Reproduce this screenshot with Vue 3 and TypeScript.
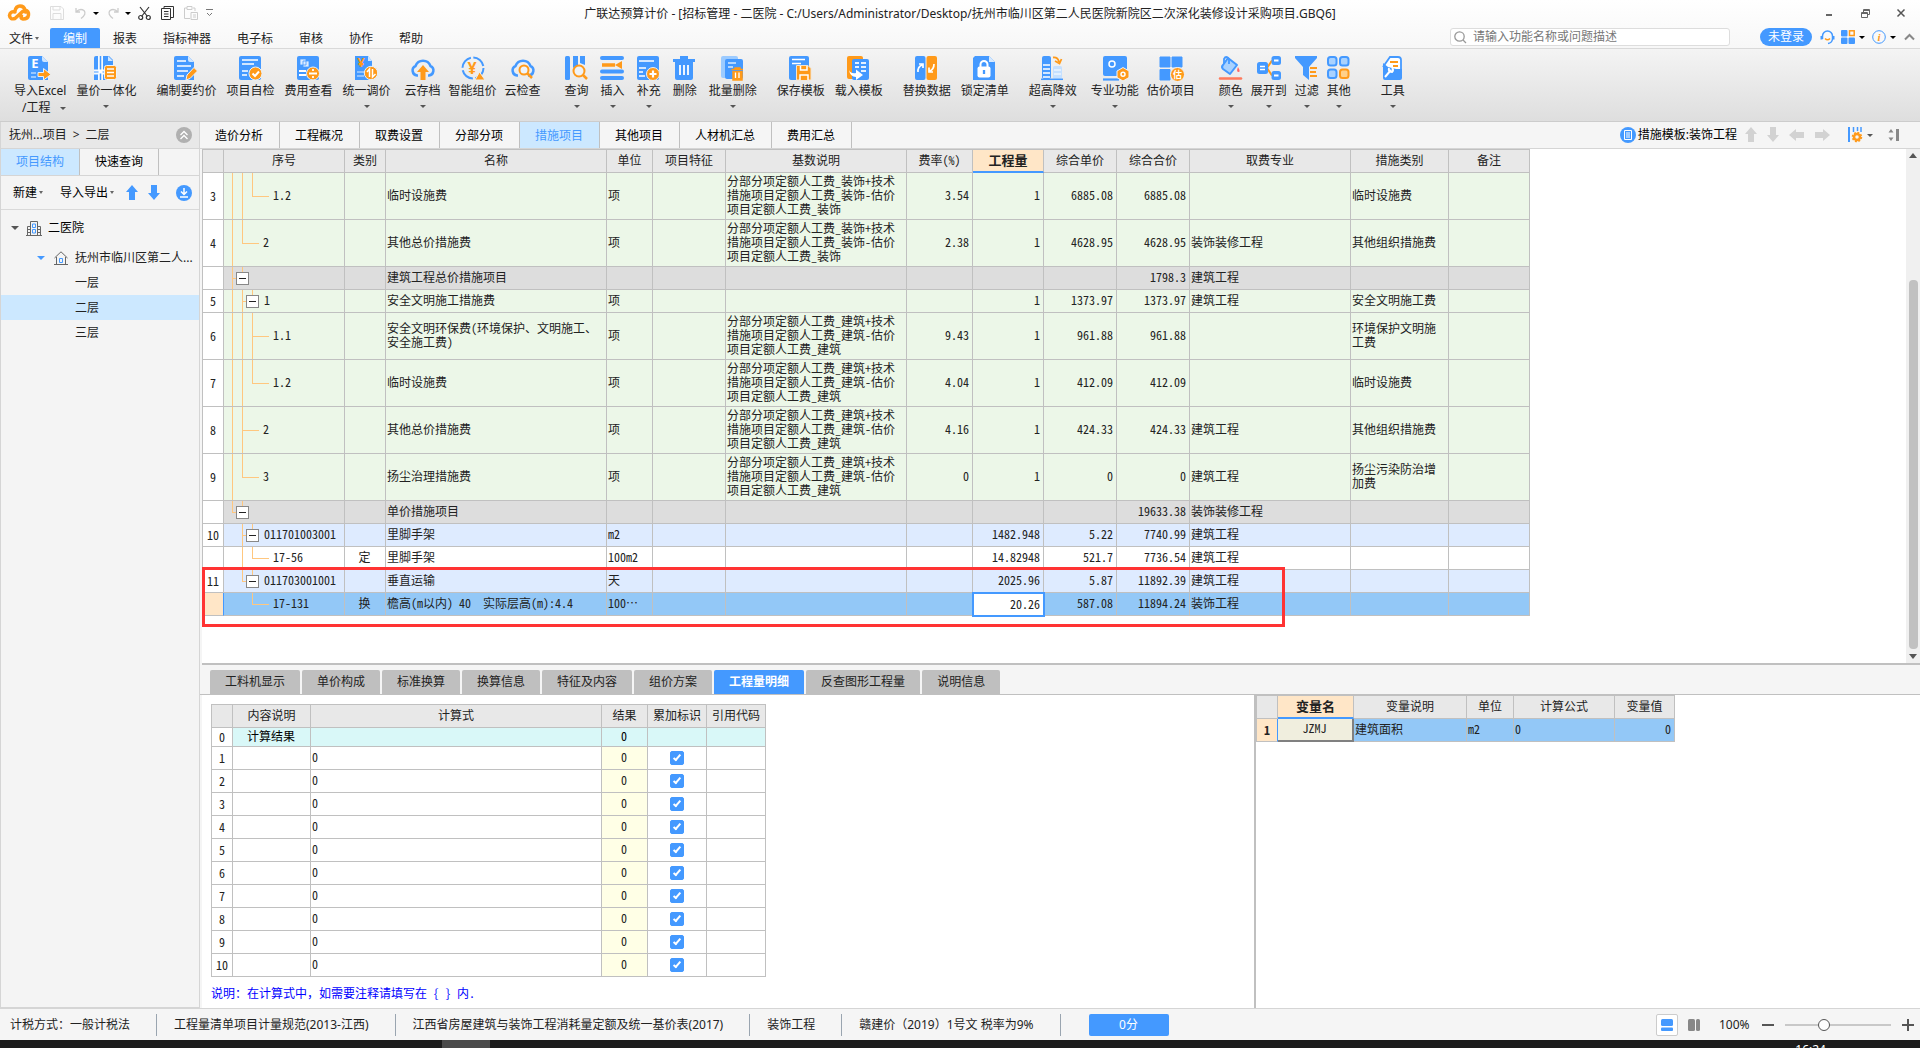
<script setup lang="ts">
import { ref } from 'vue'

interface Tool { label: string; icon: string; second?: string; menu?: boolean }
interface Group { space: string; gap: string; tools: Tool[] }
interface Line { x: number; half?: boolean }
interface Row {
  no: string
  kind: string
  tall?: boolean
  lines: Line[]
  from: number
  box?: boolean
  code: string
  type?: string
  name: string
  unit?: string
  base?: string
  rate?: string
  qty?: string
  price?: string
  total: string
  major?: string
  category?: string
}

const menus = ['编制', '报表', '指标神器', '电子标', '审核', '协作', '帮助']
const B = '#4499ff'
const O = '#ff9a1a'

const fold = `<path d="M2 0H14L20 6V24H2Q0 24 0 22V2Q0 0 2 0Z" fill="${B}"/><path d="M14 0V4Q14 6 16 6H20Z" fill="#cfe6ff"/>`
const sheet = `<rect width="22" height="24" rx="2" fill="${B}"/>`
const cloud = `<path d="M7 19.500H6A5 5 0 0 1 4.500 10A8 8 0 0 1 19.500 10A5 5 0 0 1 18 19.500H17" fill="none" stroke="${B}" stroke-width="2.500"/>`
const yen = (x: number, y: number, size: number) =>
  `<text x="${x}" y="${y}" font-size="${size}" font-weight="700" text-anchor="middle" fill="${O}" font-family="Noto Sans">¥</text>`

const icons: Record<string, string> = {
  excel: `${fold}<text x="7" y="12" font-size="13" font-weight="700" text-anchor="middle" fill="#fff" font-family="Noto Sans">E</text><path d="M3 17H8M3 21H8" stroke="#b5d7ff" stroke-width="1.500"/><path d="M10 16.500H15.500V12.500L23 18.500L15.500 24V20.500H10Z" fill="${O}" stroke="#e8f1fb"/>`,
  mix: `<path d="M0 2Q0 0 2 0H15L19 4V24H0Z" fill="${B}"/><path d="M14 0V5H19Z" fill="#cfe6ff"/><path d="M6.500 0V24M0 16H10" stroke="#f5faff" stroke-width="5"/><path d="M6.500 0V24" stroke="${B}" stroke-width="1.500"/><path d="M0 16H10" stroke="${B}"/><rect x="4.500" y="13.500" width="4" height="4" fill="#fff"/><rect x="10.500" y="9.500" width="12" height="14" rx="2" fill="${O}" stroke="#eef4fb"/><path d="M13 13H20M13 16.500H20M13 20H20" stroke="#fff" stroke-width="1.300"/>`,
  contract: `${fold}<path d="M3 5H12M3 10H17M3 15H14M3 20H10" stroke="#fff" stroke-width="1.500"/><path d="M12 24L13 19L20 11.500L23.500 15L16 22.500Z" fill="${O}" stroke="#eef4fb"/>`,
  check: `${sheet}<path d="M3 4H19M3 8H15M3 15H9M3 19H8" stroke="#fff" stroke-width="1.600"/><circle cx="16.500" cy="17.500" r="6.500" fill="${O}" stroke="#e9f2fb"/><path d="M13.500 17.500L16 20L20 15.500" fill="none" stroke="#fff" stroke-width="2"/>`,
  fee: `${sheet}<path d="M3 3H9V9H3ZM6 5H12V11H6Z" fill="#dcecff" stroke="${B}" stroke-width=".8"/><path d="M2 15H9M2 19H9" stroke="#fff" stroke-width="2"/><circle cx="16" cy="17.500" r="6.500" fill="${O}" stroke="#e9f2fb"/><path d="M12 17.500H20M16 13V15M16 20V22" stroke="#fff" stroke-width="1.800"/>`,
  adjust: `<path d="M0 0H13L17 5V24H0Z" fill="${B}"/><path d="M13 0V5H17Z" fill="#cfe6ff"/>${yen(6, 11, 13)}<path d="M2 16H9M2 20H9" stroke="#a8d0ff" stroke-width="1.500"/><circle cx="16" cy="17" r="6.700" fill="${O}" stroke="#e9f2fb"/><path d="M14.500 21V13L12 16M17.500 13V21L20.500 18" fill="none" stroke="#fff" stroke-width="1.500"/>`,
  cloudup: `${cloud}<path d="M12 9L18 16H14.500V24H9.500V16H6Z" fill="${O}"/>`,
  smart: `<circle cx="12" cy="12" r="10.500" fill="none" stroke="${B}" stroke-width="2" stroke-dasharray="14 2.500"/>${yen(11, 17.500, 16)}<path d="M14 24L18.500 16L24 24Z" fill="${O}" stroke="#eee"/>`,
  cloudcheck: `${cloud}<circle cx="13" cy="14" r="4.500" fill="#eef4fb" stroke="${O}" stroke-width="2"/><path d="M16.500 17.500L21 22" stroke="${O}" stroke-width="2.500"/>`,
  query: `<rect x="0" width="5" height="24" rx="1.500" fill="${B}"/><path d="M8 0H13V9L8 12ZM15 0H20V9L15 7Z" fill="${B}"/><circle cx="14" cy="15" r="5.500" fill="#eef2f6" stroke="${O}" stroke-width="2"/><path d="M18 19L22 23" stroke="${O}" stroke-width="2.500"/>`,
  insert: `<path d="M1 2H21M1 15.500H21M1 22H21" stroke="${B}" stroke-width="4" stroke-linecap="round"/><path d="M1 9H14" stroke="${O}" stroke-width="3.500"/><path d="M21 5V13L14 9Z" fill="${O}"/>`,
  supply: `${sheet}<path d="M2 5H17M2 12H9M2 16H6M2 20H8" stroke="#fff" stroke-width="1.500"/><circle cx="16" cy="18" r="6.500" fill="${O}" stroke="#e9f2fb"/><path d="M12.500 18H19.500M16 14.500V21.500" stroke="#fff" stroke-width="2.200"/>`,
  remove: `<path d="M7 3V0H15V3H22V6H0V3Z" fill="${B}"/><path d="M2 5H20V22Q20 24 18 24H4Q2 24 2 22Z" fill="${B}"/><path d="M7 9V19M11 9V19M15 9V19" stroke="#fff" stroke-width="1.800"/>`,
  batch: `<rect width="17" height="22" rx="2" fill="#9ccbff"/><rect x="4" y="3" width="18" height="20" rx="2" fill="${B}"/><path d="M7 7H15M7 11H12" stroke="#d7eaff" stroke-width="1.300"/><path d="M10.500 13.500H22M12 15V24H21V15M14 13V12H19V13" fill="${O}" stroke="${O}" stroke-width="1.500"/><path d="M14.500 16.500V22M18 16.500V22" stroke="#fff" stroke-width="1.300"/>`,
  save: `<rect width="20" height="24" rx="2" fill="${B}"/><path d="M3 3.500H16M3 7.500H12" stroke="#fff" stroke-width="1.600"/><path d="M7.500 9.500H19L22 12.500V24H7.500Z" fill="${O}" stroke="#f3e4cf"/><path d="M11.500 10V14H18V10M11 24V19H19V24" fill="${O}" stroke="#fff" stroke-width="1.500"/>`,
  load: `<rect width="16" height="23" rx="2" fill="${O}"/><rect x="5" y="3" width="17" height="21" rx="2" fill="${B}"/><path d="M8 7H12M14 7H19M8 11H12M14 11H19M14 15H19" stroke="#e5f1ff" stroke-width="2"/><path d="M2 14Q4 18 9 17V13.500L16 19L9 24V21Q3 21 2 14Z" fill="#fff"/>`,
  replace: `<rect width="10.500" height="24" rx="2" fill="${B}"/><rect x="11.500" width="10.500" height="24" rx="2" fill="${O}"/><path d="M3 16Q2.500 11 7 9M4 8H8V12M19 8Q19 13 15 15M14 11.500V16H18" fill="none" stroke="#fff" stroke-width="1.700"/>`,
  lock: `<path d="M2 0H16L22 6V24H0V2Z" fill="${B}"/><path d="M16 0V6H22Z" fill="#d5e9ff"/><path d="M7.500 11V8.500A3.500 3.500 0 0 1 14.500 8.500V11" fill="none" stroke="#fff" stroke-width="2"/><rect x="4.500" y="10.500" width="13" height="11" rx="2" fill="#fff"/><path d="M11 14V18" stroke="${B}" stroke-width="2.300"/>`,
  height: `<rect x="1" width="9" height="23" rx="2" fill="${B}"/><path d="M2 9H9M2 13H9M2 17H9M2 21H9" stroke="#fff" stroke-width="1.300"/><rect x="12" y="10" width="9" height="13" rx="1.500" fill="#c5e0ff"/><path d="M13 14H20M13 18H20" stroke="#fff"/><path d="M0 23.300H22" stroke="${B}" stroke-width="1.500"/><path d="M12 1.500Q17 1 18 6M14 5L18.500 7.500L20.500 3" fill="none" stroke="${O}" stroke-width="1.800"/>`,
  major: `<rect width="24" height="20" rx="2" fill="${B}"/><circle cx="9" cy="8" r="3" fill="none" stroke="#fff" stroke-width="1.500"/><path d="M0 23.500H16" stroke="${B}" stroke-width="2.200"/><path d="M20 11.500L26 15V21.500L20 25L14 21.500V15Z" fill="${O}" stroke="#eef4fb"/><circle cx="20" cy="18.200" r="2" fill="none" stroke="#fff" stroke-width="1.500"/>`,
  estimate: `<path d="M1 1H11V11H1ZM13 1H23V11H13ZM1 13.500H11V24H1Z" fill="${B}" stroke="${B}" stroke-linejoin="round"/><circle cx="18.500" cy="18.500" r="7" fill="${O}" stroke="#eef4fb"/><text x="18.500" y="22" font-size="9" font-weight="700" text-anchor="middle" fill="#fff" font-family="Noto Sans CJK SC">估</text>`,
  color: `<path d="M9 2L18 9L11 18L4 13Q2 11 4 9Z" fill="#a9d2ff" stroke="${B}" stroke-width="2" stroke-linejoin="round"/><path d="M5 8V3Q7-1 10 3V8" fill="none" stroke="${B}" stroke-width="1.800"/><path d="M19 11Q22 16 19.500 16Q17 16 19 11Z" fill="#f66"/><path d="M1 22.500H22" stroke="#ff7a5c" stroke-width="2.500" stroke-linecap="round"/>`,
  expand: `<path d="M10 12L15 4.500M10 12L15 19.500" stroke="${O}" stroke-width="2"/><rect x="0" y="6" width="11" height="12" rx="2.500" fill="${B}"/><path d="M3 10.500H8M3 13.500H8" stroke="#fff" stroke-width="1.300"/><rect x="14.500" width="9.500" height="9" rx="2.500" fill="${B}"/><rect x="14.500" y="15" width="9.500" height="9" rx="2.500" fill="${B}"/><path d="M17 4.500H21.500M17 19.500H21.500" stroke="#fff" stroke-width="2"/>`,
  filter: `<path d="M0 0H22V2L14 11V24L8 19V11L0 2Z" fill="${B}"/><path d="M15 12H22M15 16H21M15 20H22" stroke="${O}" stroke-width="1.800"/>`,
  other: `<g fill="#a9d2ff" stroke="${B}" stroke-width="2"><rect x="1" y="1" width="8.500" height="8.500" rx="2.500"/><rect x="13" y="1" width="8.500" height="8.500" rx="2.500"/><rect x="1" y="13.500" width="8.500" height="8.500" rx="2.500"/></g><rect x="13" y="13.500" width="8.500" height="8.500" rx="2.500" fill="#ffd08a" stroke="${O}" stroke-width="2"/>`,
  toolbox: `<path d="M2 11L9 1H17Q20 1 20 4V22" fill="#fff" stroke="${B}" stroke-width="1.800"/><path d="M9 6H17M12 10H17" stroke="${O}" stroke-width="1.800"/><path d="M2 7L7 11L15 13H21V22Q21 24 19 24H4Q2 24 2 22Z" fill="${B}"/><path d="M4 21L10 14M8 12Q7 16 11 16Q13 14 11 12" fill="none" stroke="#fff" stroke-width="2"/>`,
}

const groups: Group[] = [
  { space: 'sp-first', gap: 'gap-m', tools: [
    { label: '导入Excel', second: '/工程', icon: 'excel' },
    { label: '量价一体化', icon: 'mix', menu: true },
  ] },
  { space: 'sp-m', gap: 'gap-m', tools: [
    { label: '编制要约价', icon: 'contract' },
    { label: '项目自检', icon: 'check' },
    { label: '费用查看', icon: 'fee' },
    { label: '统一调价', icon: 'adjust', menu: true },
  ] },
  { space: 'sp-s', gap: 'gap-s', tools: [
    { label: '云存档', icon: 'cloudup', menu: true },
    { label: '智能组价', icon: 'smart' },
    { label: '云检查', icon: 'cloudcheck' },
  ] },
  { space: 'sp-l', gap: 'gap-l', tools: [
    { label: '查询', icon: 'query', menu: true },
    { label: '插入', icon: 'insert', menu: true },
    { label: '补充', icon: 'supply', menu: true },
    { label: '删除', icon: 'remove' },
    { label: '批量删除', icon: 'batch', menu: true },
  ] },
  { space: 'sp-m', gap: 'gap-m', tools: [
    { label: '保存模板', icon: 'save' },
    { label: '载入模板', icon: 'load' },
  ] },
  { space: 'sp-m', gap: 'gap-m', tools: [
    { label: '替换数据', icon: 'replace' },
    { label: '锁定清单', icon: 'lock' },
  ] },
  { space: 'sp-m', gap: 'gap-m', tools: [{ label: '超高降效', icon: 'height', menu: true }] },
  { space: 'sp-s', gap: 'gap-s', tools: [
    { label: '专业功能', icon: 'major', menu: true },
    { label: '估价项目', icon: 'estimate' },
  ] },
  { space: 'sp-l', gap: 'gap-s', tools: [
    { label: '颜色', icon: 'color', menu: true },
    { label: '展开到', icon: 'expand', menu: true },
    { label: '过滤', icon: 'filter', menu: true },
    { label: '其他', icon: 'other', menu: true },
  ] },
  { space: 'sp-xl', gap: 'gap-m', tools: [{ label: '工具', icon: 'toolbox', menu: true }] },
]

const crumbs = ['抚州...项目', '>', '二层']
const mainTabs = ['造价分析', '工程概况', '取费设置', '分部分项', '措施项目', '其他项目', '人材机汇总', '费用汇总']
const detailTabs = ['工料机显示', '单价构成', '标准换算', '换算信息', '特征及内容', '组价方案', '工程量明细', '反查图形工程量', '说明信息']
const headers = ['', '序号', '类别', '名称', '单位', '项目特征', '基数说明', '费率(%)', '工程量', '综合单价', '综合合价', '取费专业', '措施类别', '备注']

const deco = '分部分项定额人工费_装饰+技术措施项目定额人工费_装饰-估价项目定额人工费_装饰'
const build = '分部分项定额人工费_建筑+技术措施项目定额人工费_建筑-估价项目定额人工费_建筑'

const rows: Row[] = [
  { no: '3', kind: 'green', tall: true, lines: [{ x: 8 }, { x: 18 }, { x: 28, half: true }], from: 28, code: '1.2', name: '临时设施费', unit: '项', base: deco, rate: '3.54', qty: '1', price: '6885.08', total: '6885.08', category: '临时设施费' },
  { no: '4', kind: 'green', tall: true, lines: [{ x: 8 }, { x: 18, half: true }], from: 18, code: '2', name: '其他总价措施费', unit: '项', base: deco, rate: '2.38', qty: '1', price: '4628.95', total: '4628.95', major: '装饰装修工程', category: '其他组织措施费' },
  { no: '', kind: 'gray', lines: [{ x: 8 }], from: 8, box: true, code: '', name: '建筑工程总价措施项目', total: '1798.3', major: '建筑工程' },
  { no: '5', kind: 'green', lines: [{ x: 8 }, { x: 18 }], from: 18, box: true, code: '1', name: '安全文明施工措施费', unit: '项', qty: '1', price: '1373.97', total: '1373.97', major: '建筑工程', category: '安全文明施工费' },
  { no: '6', kind: 'green', tall: true, lines: [{ x: 8 }, { x: 18 }, { x: 28 }], from: 28, code: '1.1', name: '安全文明环保费(环境保护、文明施工、安全施工费)', unit: '项', base: build, rate: '9.43', qty: '1', price: '961.88', total: '961.88', category: '环境保护文明施工费' },
  { no: '7', kind: 'green', tall: true, lines: [{ x: 8 }, { x: 18 }, { x: 28, half: true }], from: 28, code: '1.2', name: '临时设施费', unit: '项', base: build, rate: '4.04', qty: '1', price: '412.09', total: '412.09', category: '临时设施费' },
  { no: '8', kind: 'green', tall: true, lines: [{ x: 8 }, { x: 18 }], from: 18, code: '2', name: '其他总价措施费', unit: '项', base: build, rate: '4.16', qty: '1', price: '424.33', total: '424.33', major: '建筑工程', category: '其他组织措施费' },
  { no: '9', kind: 'green', tall: true, lines: [{ x: 8 }, { x: 18, half: true }], from: 18, code: '3', name: '扬尘治理措施费', unit: '项', base: build, rate: '0', qty: '1', price: '0', total: '0', major: '建筑工程', category: '扬尘污染防治增加费' },
  { no: '', kind: 'gray', lines: [{ x: 8, half: true }], from: 8, box: true, code: '', name: '单价措施项目', total: '19633.38', major: '装饰装修工程' },
  { no: '10', kind: 'blue', lines: [{ x: 18 }], from: 18, box: true, code: '011701003001', name: '里脚手架', unit: 'm2', qty: '1482.948', price: '5.22', total: '7740.99', major: '建筑工程' },
  { no: '', kind: 'plain', lines: [{ x: 18 }, { x: 28, half: true }], from: 28, code: '17-56', type: '定', name: '里脚手架', unit: '100m2', qty: '14.82948', price: '521.7', total: '7736.54', major: '建筑工程' },
  { no: '11', kind: 'blue', lines: [{ x: 18, half: true }], from: 18, box: true, code: '011703001001', name: '垂直运输', unit: '天', qty: '2025.96', price: '5.87', total: '11892.39', major: '建筑工程' },
  { no: '', kind: 'current', lines: [{ x: 28, half: true }], from: 28, code: '17-131', type: '换', name: '檐高(m以内) 40　实际层高(m):4.4', unit: '100…', qty: '20.26', price: '587.08', total: '11894.24', major: '装饰工程' },
]

const quantity = ref('20.26')
const zoom = ref(35)
const flags = ref<boolean[]>(Array(10).fill(true))
const statusItems = ['计税方式：一般计税法', '工程量清单项目计量规范(2013-江西)', '江西省房屋建筑与装饰工程消耗量定额及统一基价表(2017)', '装饰工程', '赣建价（2019）1号文 税率为9%']

const guideWidth = (r: Row) => (r.box ? r.from + 4 : r.from + 21)
</script>

<template>
  <div class="app">
    <header class="top">
      <div class="titlebar">
        <div class="quick">
          <svg class="logo" width="24" height="18" viewBox="0 0 24 18" fill="none" stroke="#ff9a1a" stroke-width="3.500" stroke-linecap="round"><path d="M8 8Q3 7 2.500 11.500Q3 16 8 14.500L15 8Q17 6.500 18.500 8M8 7Q9 2 13 2Q17 2 18 6Q22 7 21.500 11Q21 15 16 15Q13 14.500 14.500 12" /></svg>
          <button class="qb q-save" aria-label="保存"><svg width="14" height="14" viewBox="0 0 14 14" fill="none" stroke="#ddd"><path d="M.5.5H11L13.500 3V13.500H.5ZM3 .5V4H10V.5M3 13.500V7.500H11V13.500" /></svg></button>
          <button class="qb" aria-label="撤销"><svg width="12" height="12" viewBox="0 0 12 12" fill="none" stroke="#ccc" stroke-width="1.300"><path d="M1 1V5H5M1 5Q5 1 9 3.500Q12 7 6 11.500" /></svg></button>
          <i class="caret dark"></i>
          <button class="qb q-redo" aria-label="重做"><svg width="12" height="12" viewBox="0 0 12 12" fill="none" stroke="#ccc" stroke-width="1.300"><path d="M11 1V5H7M11 5Q7 1 3 3.500Q0 7 6 11.500" /></svg></button>
          <i class="caret dark"></i>
          <button class="qb q-cut" aria-label="剪切"><svg width="13" height="13" viewBox="0 0 13 13" fill="none" stroke="#333" stroke-width="1.200"><path d="M2 0L9.500 9.500M11 0L3.500 9.500" /><circle cx="2.700" cy="10.500" r="2" /><circle cx="10.300" cy="10.500" r="2" /></svg></button>
          <button class="qb q-copy" aria-label="复制"><svg width="13" height="14" viewBox="0 0 13 14" fill="none" stroke="#333"><path d="M3 2.500V.5H12.500V11.500H10M.5 2.500H9.500V13.500H.5ZM3 5.500H7.500M3 8H7.500M3 10.500H7.500" /></svg></button>
          <button class="qb q-paste" aria-label="粘贴"><svg width="14" height="14" viewBox="0 0 14 14" fill="none" stroke="#ccc"><path d="M6 12.500H.5V2H3M9 2H11V5M3 .5H8V3.500H3ZM7 6.500H13.500V13.500H7ZM9 9H12M9 11H12" /></svg></button>
          <svg width="7" height="8" viewBox="0 0 7 8" fill="none" stroke="#777"><path d="M0 .5H7M1 4L3.500 6.500L6 4" /></svg>
        </div>
        <h1 class="title">广联达预算计价 - [招标管理 - 二医院 - C:/Users/Administrator/Desktop/抚州市临川区第二人民医院新院区二次深化装修设计采购项目.GBQ6]</h1>
        <div class="window">
          <button aria-label="最小化"><svg width="12" height="12" viewBox="0 0 12 12" fill="none" stroke="#666" stroke-width="2"><path d="M3 8H9" /></svg></button>
          <button aria-label="还原"><svg width="12" height="12" viewBox="0 0 12 12" fill="none" stroke="#666"><path d="M2.500 5.500H8.500V10.500H2.500ZM2.500 6.500H8.500M4.500 5V2.500H10.500V7.500H9M4.500 3.500H10.500" /></svg></button>
          <button aria-label="关闭"><svg width="12" height="12" viewBox="0 0 12 12" fill="none" stroke="#555" stroke-width="1.500"><path d="M2.500 2.500L9.500 9.500M9.500 2.500L2.500 9.500" /></svg></button>
        </div>
      </div>
      <div class="menubar">
        <nav class="menus">
          <button class="file">文件<i class="caret tiny"></i></button>
          <button v-for="m in menus" :key="m" :class="{ on: m === '编制' }">{{ m }}</button>
        </nav>
        <div class="account">
          <label class="search">
            <svg width="13" height="13" viewBox="0 0 13 13" fill="none" stroke="#999" stroke-width="1.300"><circle cx="5.500" cy="5.500" r="4.700" /><path d="M9 9L12 12" /></svg>
            <input type="text" placeholder="请输入功能名称或问题描述" aria-label="搜索功能" />
          </label>
          <button class="login">未登录</button>
          <svg class="headset" width="15" height="15" viewBox="0 0 15 15" fill="none" stroke="#4499ff" stroke-width="1.500"><path d="M2.500 9V6A5 5 0 0 1 12.500 6V9Q12 13 8 13.500" /><path d="M1.500 6V9.500M13.500 6V9.500" stroke-width="2" /><path d="M5 8.500Q7.500 11 10 8.500" stroke="#ff9a1a" /></svg>
          <svg class="apps" width="14" height="14" viewBox="0 0 14 14"><rect width="6.500" height="6.500" rx="1" fill="#4499ff" /><rect y="7.500" width="6.500" height="6.500" rx="1" fill="#4499ff" /><rect x="7.500" y="7.500" width="6.500" height="6.500" rx="1" fill="#4499ff" /><rect x="8.500" y=".8" width="4.700" height="4.700" fill="none" stroke="#ff9a1a" stroke-width="1.500" /></svg>
          <i class="caret dark"></i>
          <svg class="info" width="14" height="14" viewBox="0 0 14 14"><circle cx="7" cy="7" r="6.300" fill="none" stroke="#4499ff" /><text x="7" y="11" font-size="11" font-style="italic" font-weight="700" text-anchor="middle" fill="#ff9a1a" font-family="Liberation Serif">i</text></svg>
          <i class="caret dark"></i>
          <svg class="fold" width="11" height="8" viewBox="0 0 11 8" fill="none" stroke="#888" stroke-width="2"><path d="M1 6.500L5.500 2L10 6.500" /></svg>
        </div>
      </div>
    </header>

    <div class="ribbon">
      <div v-for="(g, i) in groups" :key="i" class="group" :class="[g.space, g.gap]">
        <button v-for="t in g.tools" :key="t.label" class="tool">
          <svg width="24" height="24" viewBox="0 0 24 24" v-html="icons[t.icon]" />
          <span>{{ t.label }}</span>
          <span v-if="t.second" class="second">{{ t.second }}<i class="caret"></i></span>
          <span v-if="t.menu" class="drop"><i class="caret"></i></span>
        </button>
      </div>
    </div>

    <div class="work">
      <aside class="side">
        <div class="crumb">
          <span v-for="c in crumbs" :key="c">{{ c }}</span>
          <button class="round muted" aria-label="收起"><svg width="10" height="10" viewBox="0 0 10 10" fill="none" stroke="#fff" stroke-width="1.300"><path d="M1.500 5L5 1.500L8.500 5M1.500 9L5 5.500L8.500 9" /></svg></button>
        </div>
        <div class="sidetabs"><button class="on">项目结构</button><button>快速查询</button></div>
        <div class="sidetools">
          <button>新建<i class="caret tiny"></i></button>
          <button>导入导出<i class="caret tiny"></i></button>
          <button class="up" aria-label="上移"><svg width="12" height="16" viewBox="0 0 12 16" fill="#4499ff"><path d="M6 0L12 7H9V15H3V7H0Z" /></svg></button>
          <button class="down" aria-label="下移"><svg width="12" height="16" viewBox="0 0 12 16" fill="#4499ff"><path d="M6 15L12 8H9V0H3V8H0Z" /></svg></button>
          <button class="round" aria-label="下载"><svg width="10" height="10" viewBox="0 0 10 10" fill="none" stroke="#fff" stroke-width="1.500"><path d="M5 0V6M2 3.500L5 6.500L8 3.500M1 9H9" /></svg></button>
        </div>
        <ul class="tree">
          <li class="root"><i class="caret wide"></i>
            <svg width="16" height="16" viewBox="0 0 16 16" fill="none" stroke="#666"><path d="M0 15.500H16M4.500 15V1.500H11.500V15M1.500 15V6.500H4M14.500 15V6.500H12M2 9.500H4M2 12.500H4M12 9.500H14M12 12.500H14" /><path d="M6.500 4H9.500V7.500H6.500ZM6.500 9.500H9.500V13H6.500Z" stroke="#4499ff" /></svg>二医院</li>
          <li class="child"><i class="caret wide accent"></i>
            <svg width="14" height="14" viewBox="0 0 14 14" fill="none" stroke="#666"><path d="M.5 7L7 .8L13.500 7M2.500 6V13.500H11.500V6M0 13.500H14" /><path d="M5.500 7.500H8.500V11.500H5.500Z" stroke="#4499ff" /></svg>抚州市临川区第二人...</li>
          <li class="leaf">一层</li>
          <li class="leaf on">二层</li>
          <li class="leaf">三层</li>
        </ul>
      </aside>

      <main class="main">
        <div class="maintabs">
          <button v-for="t in mainTabs" :key="t" :class="{ on: t === '措施项目' }">{{ t }}</button>
          <div class="template">
            <span class="round"><svg width="10" height="10" viewBox="0 0 10 10" fill="none" stroke="#fff"><path d="M2 .5H8.500V9.500H1.500V.5ZM3 3H7M3 5H7M3 7H7" /></svg></span>
            <span class="tname">措施模板:装饰工程</span>
            <svg class="nav" width="12" height="16" viewBox="0 0 12 16" fill="#d2d2d2"><path d="M6 0L12 7H9V15H3V7H0Z" /></svg>
            <svg class="nav" width="12" height="16" viewBox="0 0 12 16" fill="#d2d2d2"><path d="M6 15L12 8H9V0H3V8H0Z" /></svg>
            <svg class="nav" width="16" height="12" viewBox="0 0 16 12" fill="#d2d2d2"><path d="M0 6L7 0V3H15V9H7V12Z" /></svg>
            <svg class="nav" width="16" height="12" viewBox="0 0 16 12" fill="#d2d2d2"><path d="M15 6L8 0V3H0V9H8V12Z" /></svg>
            <svg class="gear" width="14" height="16" viewBox="0 0 14 16" fill="none"><path d="M1 0V15" stroke="#4499ff" stroke-width="2" /><path d="M5.500 0V5M9.500 0V4M13 0V5" stroke="#4499ff" stroke-width="1.500" /><circle cx="9" cy="10" r="3" stroke="#ff9a1a" stroke-width="2.500" /><circle cx="9" cy="10" r="4.500" stroke="#ff9a1a" stroke-width="1.500" stroke-dasharray="2 1.500" /></svg>
            <i class="caret"></i>
            <svg class="density" width="11" height="12" viewBox="0 0 11 12" fill="#888"><path d="M3 0L5.500 3.500H.5ZM3 12L5.500 8.500H.5ZM8 0H11V12H8Z" /></svg>
          </div>
        </div>

        <section class="upper">
          <div class="sheet">
            <table class="grid big">
              <colgroup><col v-for="(h, i) in headers" :key="i" :class="'c' + i" /></colgroup>
              <thead>
                <tr><th v-for="(h, i) in headers" :key="i" :class="{ hot: h === '工程量' }">{{ h }}</th></tr>
              </thead>
              <tbody>
                <tr v-for="(r, i) in rows" :key="i" :class="[r.kind, { tall: r.tall }]">
                  <th scope="row">{{ r.no }}</th>
                  <td class="code">
                    <div class="branch">
                      <svg class="guides" :width="guideWidth(r)" stroke="#ffc77f">
                        <line v-for="l in r.lines" :key="l.x" :x1="l.x + 0.5" :x2="l.x + 0.5" y1="0" :y2="l.half ? '50%' : '100%'" />
                        <line :x1="r.from" :x2="r.box ? r.from + 4 : r.from + 17" y1="50%" y2="50%" shape-rendering="crispEdges" />
                      </svg>
                      <span v-if="r.box" class="node"><button aria-label="折叠"></button><i></i></span>
                      <span class="codetext">{{ r.code }}</span>
                    </div>
                  </td>
                  <td class="mid">{{ r.type }}</td>
                  <td class="name">{{ r.name }}</td>
                  <td>{{ r.unit }}</td>
                  <td></td>
                  <td>{{ r.base }}</td>
                  <td class="num">{{ r.rate }}</td>
                  <td class="num" :class="{ editing: r.kind === 'current' }">
                    <input v-if="r.kind === 'current'" v-model="quantity" type="text" aria-label="工程量" />
                    <template v-else>{{ r.qty }}</template>
                  </td>
                  <td class="num">{{ r.price }}</td>
                  <td class="num">{{ r.total }}</td>
                  <td>{{ r.major }}</td>
                  <td>{{ r.category }}</td>
                  <td></td>
                </tr>
              </tbody>
            </table>
            <div class="mark"></div>
          </div>
          <div class="scroll">
            <svg width="8" height="5" viewBox="0 0 8 5" fill="#555"><path d="M4 0L8 5H0Z" /></svg>
            <div class="track"><div class="thumb"></div></div>
            <svg width="8" height="5" viewBox="0 0 8 5" fill="#555"><path d="M0 0H8L4 5Z" /></svg>
          </div>
        </section>

        <section class="lower">
          <div class="detailtabs">
            <button v-for="t in detailTabs" :key="t" :class="{ on: t === '工程量明细' }">{{ t }}</button>
          </div>
          <div class="panes">
            <div class="pane formulas">
              <table class="grid calc">
                <colgroup><col class="k0" /><col class="k1" /><col class="k2" /><col class="k3" /><col class="k4" /><col class="k5" /></colgroup>
                <thead><tr><th></th><th>内容说明</th><th>计算式</th><th>结果</th><th>累加标识</th><th>引用代码</th></tr></thead>
                <tbody>
                  <tr class="sum"><th scope="row">0</th><td class="mid">计算结果</td><td></td><td class="mid">0</td><td></td><td></td></tr>
                  <tr v-for="n in 10" :key="n">
                    <th scope="row">{{ n }}</th><td></td><td>0</td><td class="mid res">0</td>
                    <td class="mid"><input v-model="flags[n - 1]" type="checkbox" :aria-label="'累加标识 ' + n" /></td><td></td>
                  </tr>
                </tbody>
              </table>
              <p class="note">说明：在计算式中，如需要注释请填写在 { } 内.</p>
            </div>
            <div class="pane vars">
              <table class="grid var">
                <colgroup><col class="v0" /><col class="v1" /><col class="v2" /><col class="v3" /><col class="v4" /><col class="v5" /></colgroup>
                <thead><tr><th></th><th class="hot">变量名</th><th>变量说明</th><th>单位</th><th>计算公式</th><th>变量值</th></tr></thead>
                <tbody><tr class="current"><th scope="row">1</th><td class="mid picked">JZMJ</td><td>建筑面积</td><td>m2</td><td>0</td><td class="num">0</td></tr></tbody>
              </table>
            </div>
          </div>
        </section>
      </main>
    </div>

    <footer class="status">
      <span v-for="s in statusItems" :key="s" class="item">{{ s }}</span>
      <button class="score">0分</button>
      <div class="view">
        <button class="split on" aria-label="上下布局"><svg width="12" height="12" viewBox="0 0 12 12" fill="#4499ff"><rect width="12" height="7" rx="1.500" /><rect y="8.500" width="12" height="3.500" rx="1" /></svg></button>
        <button class="split" aria-label="左右布局"><svg width="12" height="12" viewBox="0 0 12 12" fill="#888"><rect width="7" height="12" rx="1.500" /><rect x="8" width="4" height="12" rx="1.500" /></svg></button>
        <span class="percent">100%</span>
        <button aria-label="缩小"><svg width="12" height="12" viewBox="0 0 12 12" stroke="#555" stroke-width="2"><path d="M0 6H12" /></svg></button>
        <input v-model="zoom" type="range" min="0" max="100" aria-label="缩放" />
        <button aria-label="放大"><svg width="12" height="12" viewBox="0 0 12 12" stroke="#555" stroke-width="2"><path d="M0 6H12M6 0V12" /></svg></button>
      </div>
    </footer>
    <div class="taskbar"><span class="task"></span><time>16:24</time></div>
  </div>
</template>

<style>
body { margin: 0; }
</style>

<style scoped>
.app { display: flex; flex-direction: column; height: 100vh; overflow: hidden; background: #f5f5f5; color: #222; font: 12px/16px "Noto Sans", "Noto Sans CJK SC", sans-serif; }
.app *, .app *::before, .app *::after { box-sizing: border-box; }
button { padding: 0; border: 0; background: none; color: inherit; font: inherit; white-space: nowrap; }
svg { display: block; flex: none; overflow: visible; }
.caret { flex: none; display: block; width: 0; height: 0; border: 3px solid transparent; border-top-color: #555; border-bottom: 0; }
.caret.dark { border-top-color: #000; }
.caret.tiny { border-width: 3px 2px 0; border-top-color: #666; }
.caret.wide { border-width: 4px 4px 0; }
.caret.accent { border-top-color: #49f; }

.top { flex: none; background: linear-gradient(#fff, #f7f7f7); border-bottom: 1px solid #d9d9d9; }
.titlebar { display: grid; grid-template-columns: 1fr auto 1fr; height: 26px; align-items: center; }
.quick { display: flex; align-items: center; padding-left: 7px; }
.quick .caret { margin-left: 6px; }
.q-save { margin: 0 11px 0 19px; }
.q-redo { margin-left: 8px; }
.q-cut { margin: 0 10px 0 7px; }
.q-paste { margin: 0 8px 0 10px; }
.title { margin: 2px 0 0; font-size: 12px; line-height: 24px; font-weight: 400; white-space: nowrap; }
.window { display: flex; justify-content: flex-end; gap: 24px; padding-right: 13px; }
.menubar { display: flex; justify-content: space-between; height: 22px; }
.menus { display: flex; padding-top: 2px; }
.menus button { padding: 1px 13px 0; height: 20px; border-radius: 2px 2px 0 0; }
.menus .on { background: #49f; color: #fff; }
.menus .file { display: flex; align-items: center; padding: 1px 11px 0 9px; gap: 2px; }
.account { display: flex; align-items: center; height: 22px; padding-right: 5px; }
.search { display: flex; align-items: center; gap: 6px; width: 280px; height: 18px; margin-right: 30px; padding: 0 3px; background: #fff; border: 1px solid #ddd; border-radius: 3px; }
.search input { flex: 1; min-width: 0; padding: 0; border: 0; outline: 0; background: none; font: inherit; }
.search input::placeholder { color: #777; }
.login { width: 52px; height: 18px; border-radius: 9px; background: #49f; color: #fff; line-height: 18px; }
.headset { margin: 0 6px 0 8px; }
.apps { margin-right: 4px; }
.info { margin: 0 4px 0 7px; }
.fold { margin-left: 8px; }

.ribbon { flex: none; display: flex; height: 73px; padding-top: 7px; background: linear-gradient(#f4f4f4, #dedede); border-bottom: 1px solid #ccc; }
.group { display: flex; align-items: flex-start; }
.gap-s { gap: 8px; }
.gap-m { gap: 10px; }
.gap-l { gap: 12px; }
.sp-first { padding-left: 14px; }
.sp-s { padding-left: 14px; }
.sp-m { padding-left: 20px; }
.sp-l { padding-left: 24px; }
.sp-xl { padding-left: 30px; }
.tool { display: flex; flex-direction: column; align-items: center; line-height: 20px; }
.tool > svg { margin-bottom: 1px; }
.second { display: flex; align-items: center; gap: 10px; padding-left: 8px; line-height: 16px; margin-top: -1px; }
.drop { height: 14px; padding-top: 4px; }

.work { flex: 1; display: flex; min-height: 0; }
.side { flex: none; width: 200px; border: 1px solid #d5d5d5; border-top: 0; background: #f4f4f4; }
.crumb { display: flex; align-items: center; gap: 6px; height: 27px; padding: 0 7px 0 8px; background: #e8e8e8; border-bottom: 1px solid #d5d5d5; }
.crumb button { margin-left: auto; }
.round { flex: none; display: flex; align-items: center; justify-content: center; width: 16px; height: 16px; border-radius: 8px; background: #49f; }
.round.muted { background: #b0b0b0; }
.sidetabs { display: flex; height: 27px; border-bottom: 1px solid #d5d5d5; }
.sidetabs button { width: 79px; border-right: 1px solid #c0c0c0; color: #000; }
.sidetabs .on, .maintabs .on { background: #cce8ff; color: #49f; }
.sidetools { display: flex; align-items: center; height: 34px; padding: 0 7px 0 12px; border-bottom: 1px solid #d9d9d9; color: #000; }
.sidetools button { display: flex; align-items: center; gap: 2px; }
.sidetools button + button { margin-left: 17px; }
.sidetools .up.up { margin-left: 12px; }
.sidetools .down.down { margin-left: 10px; }
.sidetools .round.round { margin-left: auto; }
.tree { margin: 0; padding: 0; list-style: none; }
.tree li { display: flex; align-items: center; height: 25px; white-space: nowrap; }
.tree .root { height: 35px; padding-left: 10px; color: #000; }
.tree .root svg { margin: 0 6px 0 7px; }
.tree .child { padding-left: 36px; }
.tree .child svg { margin: 0 7px 0 9px; }
.tree .leaf { padding-left: 74px; }
.tree .on { background: #cce8ff; }

.main { flex: 1; display: flex; flex-direction: column; min-width: 0; }
.maintabs { flex: none; display: flex; height: 27px; border-bottom: 1px solid #d5d5d5; color: #000; }
.maintabs button { padding: 1px 16px 0 15px; border-right: 1px solid #c0c0c0; }
.template { display: flex; align-items: center; margin-left: auto; padding-right: 21px; }
.tname { margin: 0 8px 0 2px; }
.nav { margin-right: 10px; }
.gear { margin: 0 5px 0 7px; }
.density { margin-left: 15px; }

.upper { flex: 515 1 0; display: flex; min-height: 0; margin-left: 2px; background: #fff; border-bottom: 2px solid #c0c0c0; overflow: hidden; }
.sheet { flex: 1; position: relative; min-width: 0; overflow: hidden; }
.mark { position: absolute; left: 0; top: 418px; width: 1083px; height: 60px; border: 3px solid #f33; pointer-events: none; }
.scroll { flex: none; display: flex; flex-direction: column; align-items: center; width: 14px; padding: 4px 0; gap: 5px; background: #f0f0f0; }
.track { flex: 1; display: flex; flex-direction: column; justify-content: flex-end; }
.thumb { width: 9px; height: 76%; border-radius: 4px; background: #c1c1c1; }

.grid { table-layout: fixed; border-collapse: separate; border-spacing: 0; border: solid #c0c0c0; border-width: 1px 0 0 1px; font: 12px/14px "Noto Sans Mono CJK SC", "Liberation Mono", "Noto Sans CJK SC", monospace; color: #222; }
.grid th, .grid td { height: 23px; padding: 0 2px 2px; border: solid #c0c0c0; border-width: 0 1px 1px 0; font-weight: 400; text-align: left; overflow: hidden; }
.grid td { padding-left: 1px; }
.grid thead th { background: #e8e8e8; text-align: center; white-space: nowrap; }
.grid tbody th { padding: 0; background: #fff; text-align: center; }
.grid thead .hot { background: #ffe6c7; border-bottom: 2px solid #49f; padding-bottom: 1px; font-weight: 700; font-size: 13px; }
.grid .num { padding-right: 3px; text-align: right; }
.grid .mid { text-align: center; }
.grid td.code { padding: 0; }
.big { width: 1328px; }
.c0 { width: 21px; } .c1 { width: 121px; } .c2 { width: 41px; } .c3 { width: 221px; } .c4 { width: 46px; } .c5 { width: 73px; } .c6 { width: 181px; }
.c7 { width: 66px; } .c8 { width: 71px; } .c9 { width: 73px; } .c10 { width: 73px; } .c11 { width: 161px; } .c12 { width: 98px; } .c13 { width: 81px; }
.big .tall td { height: 47px; }
.green td { background: #ecf7e8; }
.gray td { background: #ddd; }
.blue td { background: #deebff; }
.current td { background: #93c8f7; }
.grid .current th { background: #ffe6c7; border-right-color: #49f; font-weight: 700; }
.branch { display: flex; align-items: center; height: 22px; }
.tall .branch { height: 46px; }
.codetext { padding-bottom: 2px; }
.guides { height: 100%; }
.node { display: grid; grid-template-rows: 1fr 13px 1fr; justify-items: center; width: 13px; height: 100%; margin-right: 5px; }
.node button { grid-row: 2; width: 13px; height: 13px; border: 1px solid #888; background: linear-gradient(#222, #222) center / 7px 1px no-repeat #fff; }
.node i { width: 1px; background: #ffc77f; }
.grid .editing { padding: 0; background: #fff; outline: 2px solid #49f; outline-offset: -1px; }
.editing input { display: block; width: 100%; height: 22px; padding: 0 3px 2px 0; border: 0; outline: 0; background: none; color: inherit; font: inherit; text-align: right; }

.lower { flex: 344 1 0; display: flex; flex-direction: column; min-height: 0; }
.detailtabs { flex: none; display: flex; gap: 2px; height: 30px; padding: 5px 0 0 10px; border-bottom: 1px solid #c0c0c0; }
.detailtabs button { padding: 0 15px; border-radius: 2px 2px 0 0; background: #bfbfbf; }
.detailtabs .on { background: #49f; color: #fff; font-weight: 700; }
.panes { flex: 1; display: flex; min-height: 0; margin-left: 2px; background: #fff; }
.formulas { flex: 1043 1 0; padding: 9px 0 0 9px; }
.vars { flex: 664 1 0; border-left: 2px solid #c0c0c0; }
.calc { width: 555px; }
.k0 { width: 21px; } .k1 { width: 78px; } .k2 { width: 291px; } .k3 { width: 46px; } .k4 { width: 59px; } .k5 { width: 59px; }
.grid .sum > * { height: 19px; }
.sum td { background: #d9f8f8; color: #000; }
.grid .res { background: #ffffe6; }
.calc input { appearance: none; display: block; width: 14px; height: 14px; margin: 2px auto 0; border-radius: 2px; border: 1px solid #49f; background: #fff; }
.calc input:checked { background: #49f; }
.calc input:checked::before { content: ""; display: block; width: 8px; height: 4px; margin: 3px 0 0 2px; border: solid #fff; border-width: 0 0 2px 2px; transform: rotate(-50deg); }
.note { margin: 7px 0 0; color: #00f; font: 12px/18px "Noto Sans Mono CJK SC", "Noto Sans CJK SC", sans-serif; }
.var { width: 419px; }
.v0 { width: 21px; } .v1 { width: 76px; } .v2 { width: 113px; } .v3 { width: 47px; } .v4 { width: 101px; } .v5 { width: 60px; }
.grid .picked { background: #f0eede; border: solid #808080; border-width: 0 2px 2px 0; }

.status { flex: none; display: flex; align-items: center; height: 32px; border-top: 1px solid #d5d5d5; padding: 0 6px 0 10px; }
.item { padding-right: 26px; margin-right: 17px; border-right: 1px solid #9aa5b0; line-height: 22px; white-space: nowrap; }
.score { width: 80px; height: 22px; margin-left: 11px; border-radius: 2px; background: #49f; color: #fff; }
.view { display: flex; align-items: center; margin-left: auto; }
.split { display: flex; align-items: center; justify-content: center; width: 22px; height: 22px; margin-right: 5px; border: 1px solid transparent; border-radius: 2px; }
.split.on { border-color: #ccc; background: #fff; }
.percent { width: 32px; margin: 0 11px 0 9px; }
.view input { appearance: none; width: 106px; height: 14px; margin: 0 11px; background: linear-gradient(#c8c8c8, #c8c8c8) center / 100% 2px no-repeat; }
.view input::-webkit-slider-thumb { appearance: none; width: 12px; height: 12px; border: 1px solid #555; border-radius: 50%; background: #fff; }
.taskbar { flex: none; display: flex; justify-content: space-between; height: 8px; overflow: hidden; background: #1c1c1c; color: #fff; }
.task { width: 48px; margin-left: 442px; background: #4a4a4a; }
time { margin-right: 94px; padding-top: 2px; }
</style>
